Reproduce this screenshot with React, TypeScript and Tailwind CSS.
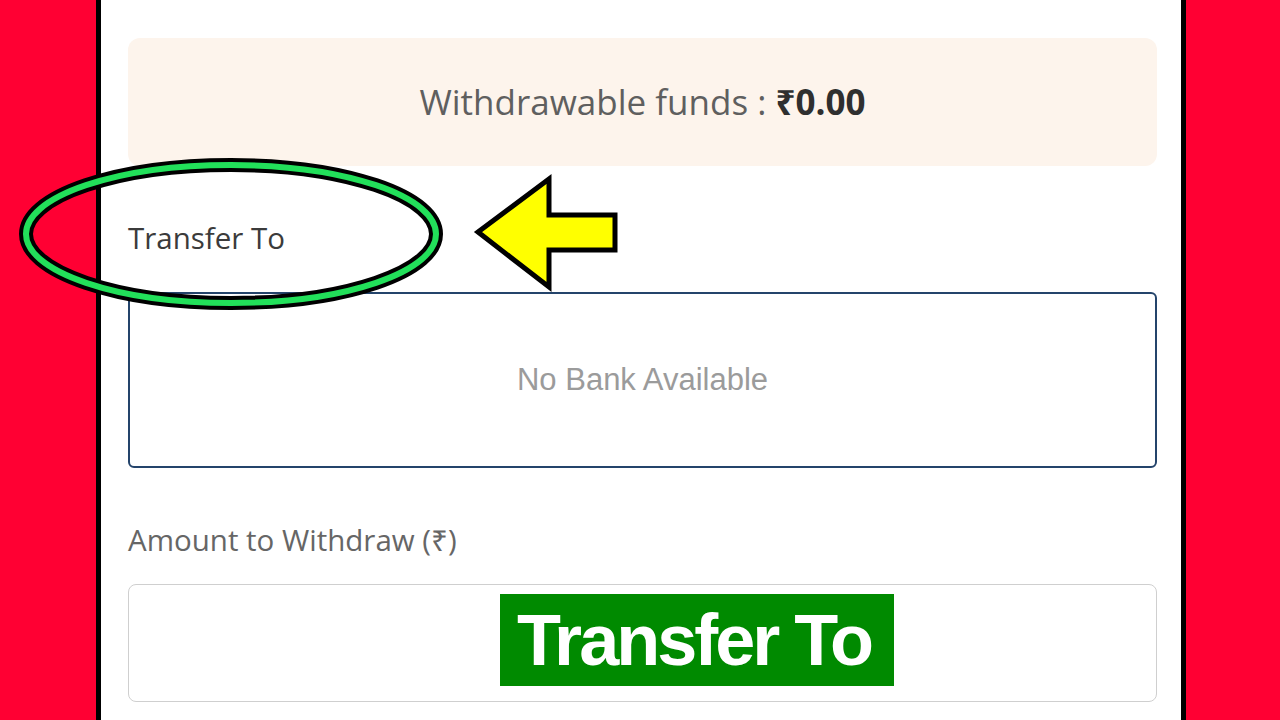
import React from 'react';

const sans = { fontFamily: '"Open Sans", "Noto Sans", sans-serif' };

const App: React.FC = () => {
  return (
    <div className="relative flex h-[720px] w-[1280px] overflow-hidden bg-[#ff0033]">
      <div className="w-[96px] shrink-0" />

      {/* phone screen */}
      <div className="w-[1090px] shrink-0 border-x-[5px] border-black bg-white pl-[27px] pr-[24px] pt-[38px]" style={sans}>
        <div className="flex h-[128px] items-center justify-center rounded-[12px] bg-[#fdf4ec] text-[35px] text-[#5f5f5f]">
          <span>
            Withdrawable funds : <span className="font-bold text-[#2f2f2f]">₹0.00</span>
          </span>
        </div>

        <div className="mt-[52px] h-[40px] text-[29.5px] leading-[40px] text-[#3b3b3b]">Transfer To</div>

        <div className="mt-[34px] flex h-[176px] items-center justify-center rounded-[6px] border-2 border-[#24446b]">
          <span className="text-[31px] text-[#9b9b9b]" style={{ fontFamily: '"Liberation Sans", Arial, sans-serif' }}>
            No Bank Available
          </span>
        </div>

        <div className="mt-[52px] h-[40px] text-[29.5px] leading-[40px] text-[#666666]">Amount to Withdraw (₹)</div>

        <div className="mt-[24px] h-[118px] rounded-[8px] border border-[#cfcfcf]" />
      </div>

      <div className="flex-1" />

      {/* highlight ellipse */}
      <svg className="absolute left-0 top-0" width="480" height="330" viewBox="0 0 480 330">
        <ellipse cx="231" cy="234" rx="205" ry="69" fill="none" stroke="#000" strokeWidth="14" />
        <ellipse cx="231" cy="234" rx="205" ry="69" fill="none" stroke="#22e05a" strokeWidth="6" />
      </svg>

      {/* pointer arrow */}
      <svg className="absolute left-[460px] top-[165px]" width="170" height="135" viewBox="460 165 170 135">
        <polygon
          points="478,232 549,179 549,215 615,215 615,250 549,250 549,287"
          fill="#ffff00"
          stroke="#000"
          strokeWidth="5"
          strokeLinejoin="miter"
        />
      </svg>

      {/* caption */}
      <div className="absolute left-[500px] top-[594px] flex h-[92px] w-[394px] items-center justify-center bg-[#008a00]">
        <span
          className="pr-[6px] text-[72px] font-bold leading-none tracking-[-3px] text-white"
          style={{ fontFamily: '"Liberation Sans", Arial, sans-serif' }}
        >
          Transfer To
        </span>
      </div>
    </div>
  );
};

export default App;
